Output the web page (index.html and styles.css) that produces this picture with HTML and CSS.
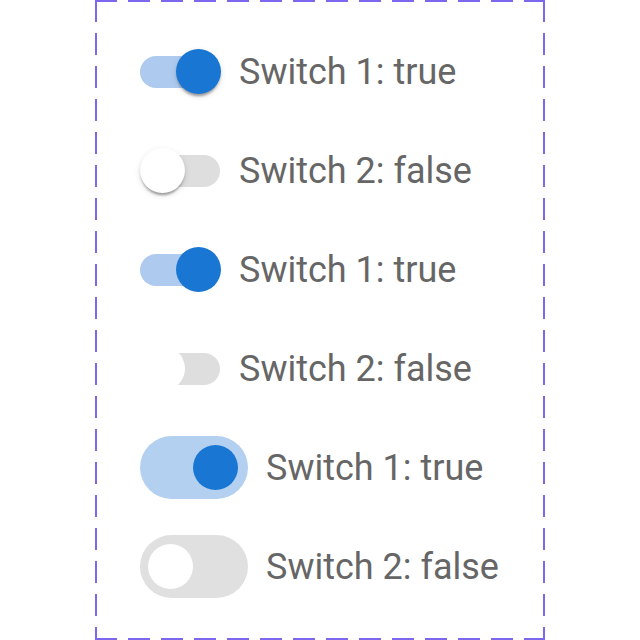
FILE: index.html
```html
<!DOCTYPE html>
<html>
<head>
<meta charset="utf-8">
<link rel="stylesheet" href="styles.css">
</head>
<body>
<div class="frame">
  <div class="row">
    <span class="sw on"><span class="track"></span><span class="thumb shadow"></span></span>
    <span class="label">Switch 1: true</span>
  </div>
  <div class="row">
    <span class="sw"><span class="track"></span><span class="thumb shadow"></span></span>
    <span class="label">Switch 2: false</span>
  </div>
  <div class="row">
    <span class="sw on"><span class="track"></span><span class="thumb"></span></span>
    <span class="label">Switch 1: true</span>
  </div>
  <div class="row">
    <span class="sw"><span class="track"></span><span class="thumb"></span></span>
    <span class="label">Switch 2: false</span>
  </div>
  <div class="row">
    <span class="big on"><span class="knob"></span></span>
    <span class="label wide">Switch 1: true</span>
  </div>
  <div class="row">
    <span class="big"><span class="knob"></span></span>
    <span class="label wide">Switch 2: false</span>
  </div>
</div>
</body>
</html>
```

FILE: styles.css
```css
html, body {
  margin: 0;
  padding: 0;
  background: #ffffff;
}

.frame {
  box-sizing: border-box;
  margin-left: 95px;
  width: 450px;
  height: 640px;
  padding: 22px 0 0 45px;
  background:
    repeating-linear-gradient(90deg, #7b68ee 0 22px, transparent 22px 33px) left top / 100% 2px no-repeat,
    repeating-linear-gradient(90deg, #7b68ee 0 22px, transparent 22px 33px) left bottom / 100% 2px no-repeat,
    repeating-linear-gradient(180deg, #7b68ee 0 22px, transparent 22px 33px) left top / 2px 100% no-repeat,
    repeating-linear-gradient(180deg, #7b68ee 0 22px, transparent 22px 33px) right top / 2px 100% no-repeat;
}

.row {
  display: flex;
  align-items: center;
  height: 99px;
}

.sw {
  position: relative;
  flex: none;
  width: 80px;
  height: 45px;
}

.track {
  position: absolute;
  left: 1px;
  top: 6.5px;
  width: 79px;
  height: 32px;
  border-radius: 16px;
  background: #dedede;
}

.sw.on .track {
  left: 0;
  width: 80px;
  background: #aecbef;
}

.thumb {
  position: absolute;
  top: 0;
  left: 0;
  width: 45px;
  height: 45px;
  border-radius: 50%;
  background: #ffffff;
}

.sw.on .thumb {
  left: 36px;
  background: #1976d2;
}

.thumb.shadow {
  box-shadow: 0 4.5px 2.25px -2.25px rgba(0,0,0,0.2), 0 2.25px 2.25px 0 rgba(0,0,0,0.14), 0 2.25px 6.75px 0 rgba(0,0,0,0.12);
}

.big {
  box-sizing: border-box;
  flex: none;
  display: flex;
  align-items: center;
  justify-content: flex-start;
  width: 108px;
  height: 63px;
  padding: 0 8px;
  border-radius: 32px;
  background: #e0e0e0;
}

.big.on {
  justify-content: flex-end;
  padding: 0 10px;
  background: #b3d0f1;
}

.knob {
  width: 45px;
  height: 45px;
  border-radius: 50%;
  background: #ffffff;
}

.big.on .knob {
  background: #1976d2;
}

.label {
  margin-left: 19px;
  font-family: Roboto, "Liberation Sans", sans-serif;
  font-size: 36px;
  color: #666666;
  white-space: nowrap;
}

.label.wide {
  margin-left: 18px;
}
```
